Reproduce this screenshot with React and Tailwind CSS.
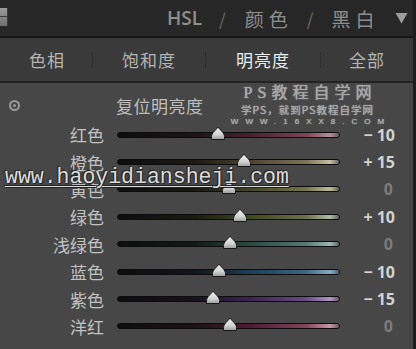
import React from "react";

const rows = [
  { label: "红色", value: "− 10", dim: false, pos: 101, track: "bg-[linear-gradient(to_right,#0e0e0e_0%,#1c1416_35%,#4a2129_60%,#7a4652_85%,#b48e96_96%,#6a5a5e_100%)]" },
  { label: "橙色", value: "+ 15", dim: false, pos: 127, track: "bg-[linear-gradient(to_right,#0e0e0e_0%,#1c1a14_35%,#4c4430_60%,#7c7458_85%,#c4bea2_96%,#6a685c_100%)]" },
  { label: "黄色", value: "0", dim: true, pos: 112, track: "bg-[linear-gradient(to_right,#0e0e0e_0%,#1a1a12_35%,#44442a_60%,#74744c_85%,#bcbc98_96%,#66665a_100%)]" },
  { label: "绿色", value: "+ 10", dim: false, pos: 123, track: "bg-[linear-gradient(to_right,#0e0e0e_0%,#181c10_35%,#3c4a1c_60%,#667448_85%,#b0baa4_96%,#5e665a_100%)]" },
  { label: "浅绿色", value: "0", dim: true, pos: 113, track: "bg-[linear-gradient(to_right,#0e0e0e_0%,#121a18_35%,#2a4a40_60%,#547a70_85%,#9cb8b0_96%,#5a6864_100%)]" },
  { label: "蓝色", value: "− 10", dim: false, pos: 102, track: "bg-[linear-gradient(to_right,#0e0e0e_0%,#12161c_35%,#1e3c58_60%,#3e6686_85%,#8aaac4_96%,#5a6470_100%)]" },
  { label: "紫色", value: "− 15", dim: false, pos: 96, track: "bg-[linear-gradient(to_right,#0e0e0e_0%,#18121c_35%,#3c2452_60%,#6a4a84_85%,#ac94c4_96%,#665c70_100%)]" },
  { label: "洋红", value: "0", dim: true, pos: 113, track: "bg-[linear-gradient(to_right,#0e0e0e_0%,#1c1216_35%,#4e1c32_60%,#84445a_85%,#c498a6_96%,#6c5a60_100%)]" },
];

function Thumb({ left }) {
  return (
    <svg
      className="absolute top-[-6px]"
      style={{ left: left - 8 }}
      width="16"
      height="15"
      viewBox="0 0 16 15"
    >
      <defs>
        <linearGradient id="tg" x1="0" y1="0" x2="0" y2="1">
          <stop offset="0" stopColor="#f0f0f0" />
          <stop offset="0.6" stopColor="#d4d4d4" />
          <stop offset="1" stopColor="#9a9a9a" />
        </linearGradient>
      </defs>
      <path
        d="M8 1 C9.5 3.5 14.5 7 14.5 10.5 L14.5 13.5 L1.5 13.5 L1.5 10.5 C1.5 7 6.5 3.5 8 1 Z"
        fill="url(#tg)"
        stroke="#1a1a1a"
        strokeWidth="1"
      />
    </svg>
  );
}

export default function App() {
  const cjk = { fontFamily: '"Noto Sans CJK SC", "Noto Sans", sans-serif' };
  return (
    <div
      className="relative w-[416px] h-[349px] overflow-hidden bg-[#474747] border-r-[3px] border-[#1e1e1e]"
      style={cjk}
    >
      {/* top bar */}
      <div className="relative h-[38px] bg-[#272727] border-b-2 border-[#161616] flex items-center">
        <div className="absolute left-0 top-[8px] w-[8px] h-[18px] bg-[linear-gradient(to_bottom,#9a9a9a,#6e6e6e)] border-r border-[#3a3a3a]">
          <div className="mt-[8px] h-[1px] bg-[#3a3a3a]" />
        </div>
        <div className="ml-[167px] flex items-center text-[19px] text-[#8e8e8e] leading-none">
          <span className="font-semibold" style={{ fontFamily: '"Open Sans", "Noto Sans", sans-serif' }}>HSL</span>
          <span className="ml-[17px] text-[17px] text-[#6c6c6c]">/</span>
          <span className="ml-[19px] tracking-[5px]">颜色</span>
          <span className="ml-[14px] text-[17px] text-[#6c6c6c]">/</span>
          <span className="ml-[18px] tracking-[5px]">黑白</span>
          <svg className="ml-[16px]" width="13" height="12" viewBox="0 0 13 12">
            <path d="M0.5 1 L12.5 1 L6.5 11.5 Z" fill="#9c9c9c" />
          </svg>
        </div>
      </div>

      {/* tabs */}
      <div className="h-[45px] bg-[#3a3a3a] border-b-2 border-[#232323] grid grid-cols-[92px_113px_115px_1fr] items-center text-[17px] leading-none">
        <div className="flex justify-center text-[#b4b4b4] tracking-[1px] pl-[2px]">色相</div>
        <div className="flex justify-center text-[#b4b4b4] tracking-[1px] border-l border-[#2e2e2e] h-[16px] items-center">饱和度</div>
        <div className="flex justify-center text-[#ececec] tracking-[1px] border-l border-[#2e2e2e] h-[16px] items-center">明亮度</div>
        <div className="flex justify-center text-[#b4b4b4] tracking-[1px] border-l border-[#2e2e2e] h-[16px] items-center">全部</div>
      </div>

      {/* reset row */}
      <div className="h-[38px] pt-[6px] flex items-center">
        <div className="ml-[9px] w-[11px] h-[11px] rounded-full border-2 border-[#9a9a9a] flex items-center justify-center">
          <div className="w-[3px] h-[3px] rounded-full bg-[#9a9a9a]" />
        </div>
        <div className="ml-[96px] text-[17px] text-[#bdbdbd] leading-none tracking-[0.5px]">复位明亮度</div>
      </div>

      {/* slider rows */}
      <div className="flex flex-col">
        {rows.map((r) => (
          <div key={r.label} className="h-[27.4px] flex items-center">
            <div className="w-[104px] text-right text-[17px] text-[#c2c2c2] leading-none">{r.label}</div>
            <div className="relative ml-[13px] w-[223px] h-[6px]">
              <div className={`absolute inset-0 rounded-full border border-[#0c0c0c] ${r.track}`} />
              <Thumb left={r.pos} />
            </div>
            <div
              className={`w-[55px] text-right text-[16px] font-bold leading-none ${r.dim ? "text-[#7c7c7c] pr-[2px]" : "text-[#d2d2d2]"}`}
              style={{ fontFamily: '"Open Sans", "Noto Sans", sans-serif' }}
            >
              {r.value}
            </div>
          </div>
        ))}
      </div>

      {/* watermark: PS教程自学网 */}
      <div className="absolute left-[230px] top-[85px] w-[155px] flex flex-col items-center leading-none text-[#a6a6a6] [text-shadow:0_0_1px_#d0d0d0]">
        <div className="h-[16px] text-[16px] leading-[16px] tracking-[5px] pl-[5px]" style={{ fontFamily: '"Liberation Serif", "Noto Sans CJK SC", serif' }}>PS教程自学网</div>
        <div className="mt-[3px] h-[11px] text-[10.5px] leading-[11px] tracking-[1px]">学PS，就到PS教程自学网</div>
        <div className="mt-[3px] text-[8px] tracking-[7px] pl-[7px]" style={{ fontFamily: '"Liberation Sans", sans-serif' }}>WWW.16XX8.COM</div>
      </div>

      {/* watermark: url */}
      <div
        className="absolute left-[5px] top-[167px] text-[21.5px] leading-none text-[#dcdcdc] underline decoration-1 underline-offset-[3px] [text-shadow:1px_1px_1px_#222,-1px_-1px_1px_#222]"
        style={{ fontFamily: '"Liberation Mono", "Courier New", monospace' }}
      >
        www.haoyidiansheji.com
      </div>
    </div>
  );
}
